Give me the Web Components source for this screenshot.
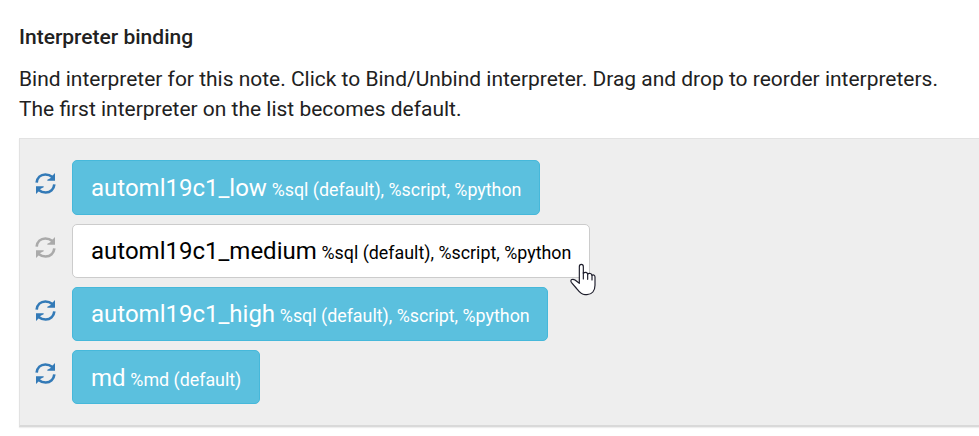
<!DOCTYPE html>
<html lang="en"><head><meta charset="utf-8"><title>Interpreter binding</title>
<style>html,body{margin:0;background:#fff;overflow:hidden}body{height:436px;font-family:Roboto,"Liberation Sans",sans-serif;color:#212121}</style></head>
<body>
<interpreter-binding>
<span slot="title">Interpreter binding</span>
<span slot="intro">Bind interpreter for this note. Click to Bind/Unbind interpreter. Drag and drop to reorder interpreters.<br>The first interpreter on the list becomes default.</span>
<interpreter-row style="--h:55px;--line:54px"><span slot="name">automl19c1_low</span><span slot="types">%sql (default), %script, %python</span></interpreter-row>
<interpreter-row off><span slot="name">automl19c1_medium</span><span slot="types">%sql (default), %script, %python</span><pointer-hand slot="cursor"></pointer-hand></interpreter-row>
<interpreter-row><span slot="name">automl19c1_high</span><span slot="types">%sql (default), %script, %python</span></interpreter-row>
<interpreter-row style="--line:54px"><span slot="name">md</span><span slot="types">%md (default)</span></interpreter-row>
</interpreter-binding>
<script>
const define = (name, html) => customElements.define(name, class extends HTMLElement {
  constructor() { super(); this.attachShadow({mode: 'open'}).innerHTML = html; }
});
const arrow = `<path d="M5 29C6.500 14 17 4.500 31 4.500C39 4.500 46 7 52 12" fill="none" stroke="currentColor" stroke-width="8"/><path d="M60 0V23H37V20.500L46 15.500L51 9Z" fill="currentColor"/>`;
define('refresh-icon', `<style>:host{display:block;width:21px;height:21px}svg{display:block}</style>
<svg width="21" height="21" viewBox="0 0 63 63">${arrow}<g transform="rotate(180 31.5 31.5)">${arrow}</g></svg>`);
define('pointer-hand', `<style>:host{display:block;position:absolute;right:-7px;bottom:-19px;width:26px;height:33px}svg{display:block}</style>
<svg width="26" height="33" viewBox="0 0 78 99"><path d="M28 61V11C28 2 40 2 40 11V31C45 26 52 28 53 33C58 29 65 32 66 37C71 34 75 37 75 42V67C75 83 66 95 51 95H45C33 95 27 86 21 78L4 58C-1 49 9 47 15 51L28 61Z" fill="#fff" stroke="#1d1d2b" stroke-width="3.500" stroke-linejoin="round"/><path d="M40 29V48M53 33V49M66 37V51" stroke="#1d1d2b" stroke-width="3.500" stroke-linecap="round"/></svg>`);
define('interpreter-row', `<style>
:host{display:flex;align-items:flex-start;height:var(--h,54px);color:#fff}
refresh-icon{margin:13px 16px 0 0;color:#337ab7}
:host([off]) refresh-icon{color:#aaa}
.button{position:relative;box-sizing:border-box;height:100%;padding:0 17.8px 0 18px;border:1px solid #46b8da;border-radius:5px;background:#5bc0de;font-size:24px;line-height:var(--line,52px);white-space:nowrap}
:host([off]) .button{background:#fff;color:#000;border-color:#ccc}
small{font-size:17.85px;margin-left:-1.2px}
</style><refresh-icon></refresh-icon><div class="button"><slot name="name"></slot> <small><slot name="types"></slot></small><slot name="cursor"></slot></div>`);
define('interpreter-binding', `<style>
:host{display:block;padding:22px 0 0 19px}
h2{margin:0;font-size:21px;line-height:30px;font-weight:500}
p{margin:12px 0 0;font-size:20.98px;line-height:30px;white-space:nowrap}
.list{display:flex;flex-direction:column;gap:9px;box-sizing:border-box;height:289px;margin-top:14px;padding:21px 0 0 15px;background:#eee;border:solid #e2e2e2;border-width:1px 0 0 1px;border-bottom:2px solid #d9d9d9;box-shadow:0 1px 1px #eee}
</style><h2><slot name="title"></slot></h2><p><slot name="intro"></slot></p><div class="list"><slot></slot></div>`);
</script></body></html>
